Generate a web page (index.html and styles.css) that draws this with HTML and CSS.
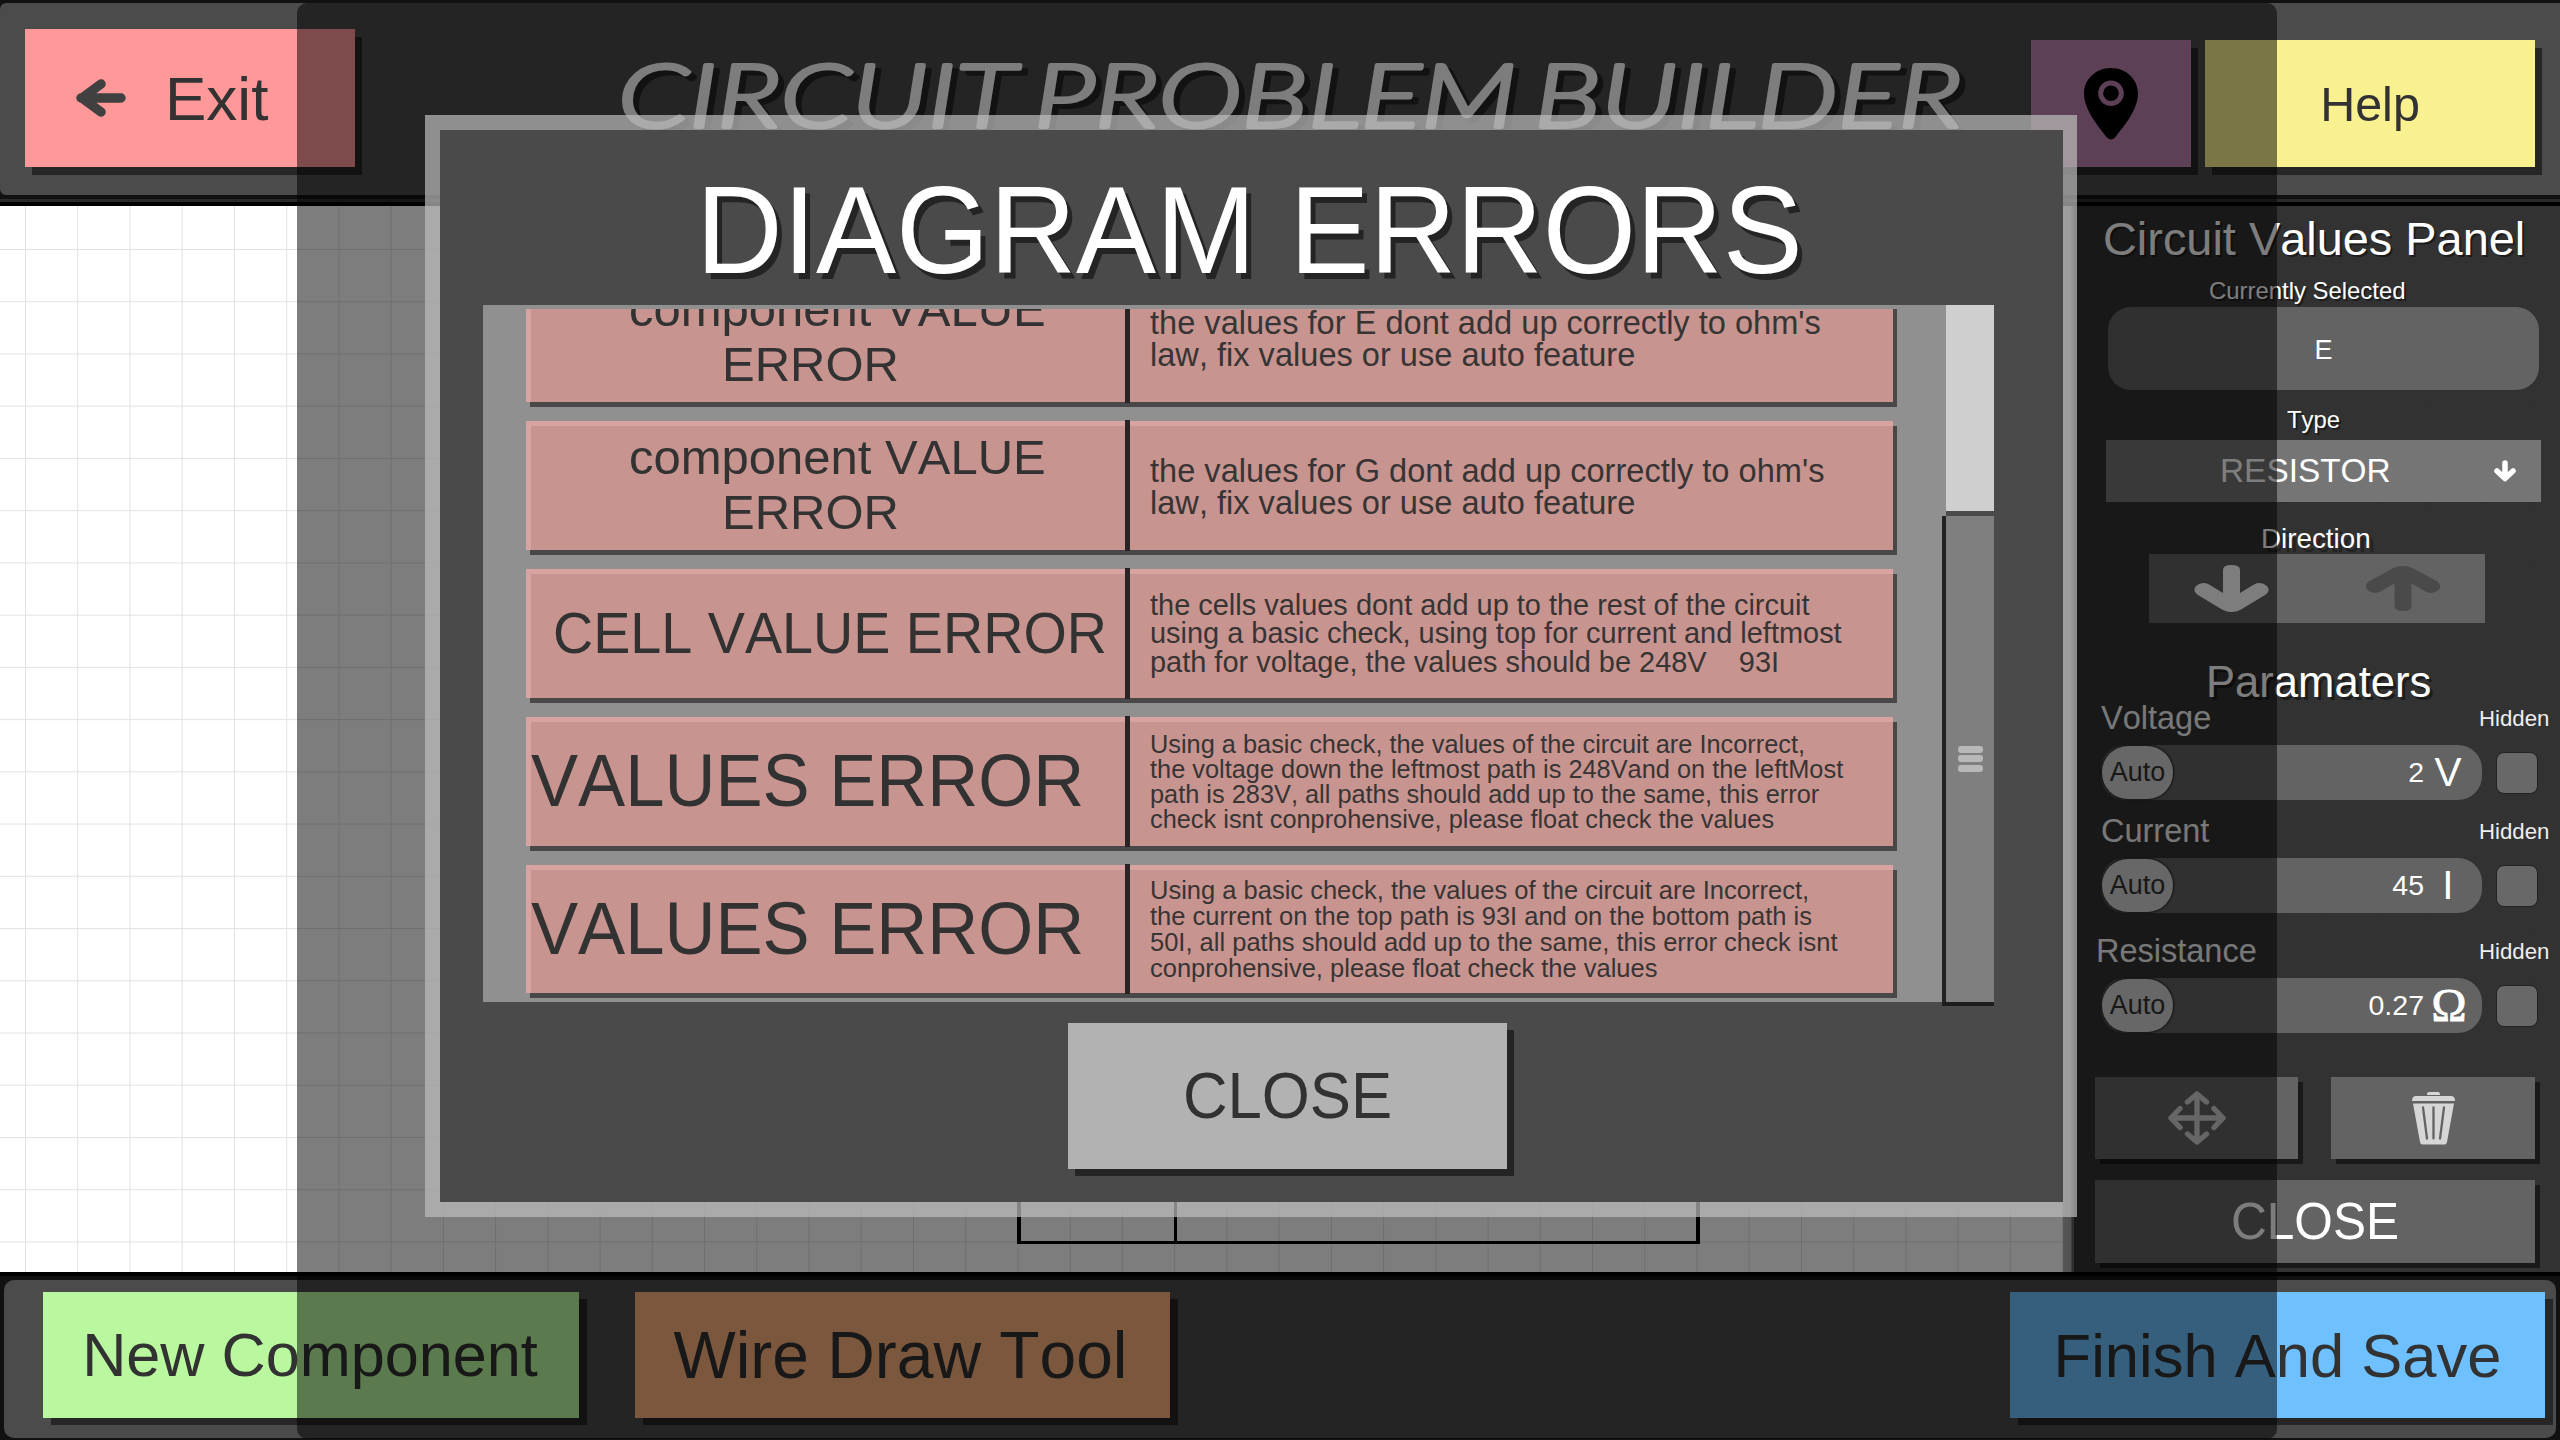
FILE: index.html
```html
<!DOCTYPE html>
<html lang="en">
<head>
<meta charset="utf-8">
<title>Circuit Problem Builder</title>
<link rel="stylesheet" href="styles.css">
</head>
<body>
<header class="topbar">
  <div class="topbar-inner">
    <button class="btn exit">
      <svg class="exit-icon" viewBox="0 0 50 38"><path d="M5 19H45M6 19L25 5M6 19L25 33" fill="none" stroke="currentColor" stroke-width="9.500" stroke-linecap="round" stroke-linejoin="round"/></svg>
      <span>Exit</span>
    </button>
    <svg class="app-title" viewBox="0 0 1400 192">
      <text class="app-title-shadow" x="24" y="129" textLength="1344" lengthAdjust="spacingAndGlyphs">CIRCUIT PROBLEM BUILDER</text>
      <text x="18" y="124" textLength="1344" lengthAdjust="spacingAndGlyphs">CIRCUIT PROBLEM BUILDER</text>
    </svg>
    <button class="btn map">
      <svg class="pin" viewBox="0 0 54 72"><path fill-rule="evenodd" d="M27 0C12 0 0 11 0 26C0 43 18 63 23 69.500Q27 73.500 31 69.500C36 63 54 43 54 26C54 11 42 0 27 0ZM27 12.500a12.800 12.800 0 1 1 0 25.600a12.800 12.800 0 1 1 0-25.600Z"/><circle cx="27" cy="25.300" r="7.800"/></svg>
    </button>
    <button class="btn help">Help</button>
  </div>
</header>

<main class="workspace">
  <svg class="wires" viewBox="0 0 2063 1066">
    <path d="M1019 900V1037.500" stroke-width="4"/><path d="M1175.500 900V1037.500" stroke-width="3"/>
    <path d="M1017 1036.500H1700" stroke-width="3"/><path d="M1698 900V1038" stroke-width="4"/>
  </svg>
  <aside class="panel">
    <h2 class="panel-title">Circuit Values Panel</h2>
    <div class="caption selected-caption">Currently Selected</div>
    <div class="selected">E</div>
    <div class="caption type-caption">Type</div>
    <div class="dropdown"><span>RESISTOR</span>
      <svg viewBox="0 0 22 22"><path d="M11 3V18M3 11L11 18.500L19 11" fill="none" stroke="#fff" stroke-width="5.500" stroke-linecap="round" stroke-linejoin="round"/></svg>
    </div>
    <div class="caption direction-caption">Direction</div>
    <div class="direction">
      <svg class="dir-down" viewBox="0 0 75 47"><path d="M29 5Q29 0 37.500 0T46 5V28L60 19.500Q67 16 73 21Q77 26 71 30L47 44.500Q37.500 49.500 28 44.500L4 30Q-2 26 2 21Q8 16 15 19.500L29 28Z"/></svg>
      <svg class="dir-up" viewBox="0 0 75 45"><path d="M29 40Q29 45 37.500 45T46 40V17.500L60 25.500Q67 29 73 24Q77 19 71 15L47 2Q37.500-2 28 2L4 15Q-2 19 2 24Q8 29 15 25.500L29 17.500Z"/></svg>
    </div>
    <h3 class="params-title">Paramaters</h3>

    <div class="labels"><span class="name">Voltage</span><span class="hidden-label">Hidden</span></div>
    <div class="param"><div class="slider"><button class="auto">Auto</button><span class="value">2</span><span class="unit">V</span></div><i class="check"></i></div>
    <div class="labels current"><span class="name">Current</span><span class="hidden-label">Hidden</span></div>
    <div class="param"><div class="slider"><button class="auto">Auto</button><span class="value">45</span><span class="unit">I</span></div><i class="check"></i></div>
    <div class="labels resistance"><span class="name">Resistance</span><span class="hidden-label">Hidden</span></div>
    <div class="param"><div class="slider"><button class="auto">Auto</button><span class="value">0.27</span><span class="unit ohm">Ω</span></div><i class="check"></i></div>

    <div class="actions">
      <button class="tool move"><svg viewBox="0 0 58 54"><path d="M29 3V51M3 27H55M19.500 11L29 3L38.500 11M19.500 43L29 51L38.500 43M12 17.500L3 27L12 36.500M46 17.500L55 27L46 36.500" fill="none" stroke="#d0d0d0" stroke-width="5.300" stroke-linecap="round" stroke-linejoin="round"/></svg></button>
      <button class="tool trash"><svg viewBox="0 0 43 53"><path fill="#d6d6d6" d="M17 0H26Q28 0 28 3H15Q15 0 17 0ZM4 4H39Q43 4 43 9H0Q0 4 4 4ZM1 11.500H42L35 50Q34.500 52.500 32.500 52.500H10.500Q8.500 52.500 8 50Z"/><path d="M11 15.500L15 46.500M21.500 15.500V46.500M32 15.500L28 46.500" stroke="#636363" stroke-width="2.300" stroke-linecap="round"/></svg></button>
    </div>
    <button class="tool panel-close"><span class="caps">CLOSE</span></button>
  </aside>
</main>

<footer class="bottombar">
  <div class="bottombar-inner">
    <button class="btn new">New Component</button>
    <button class="btn wire">Wire Draw Tool</button>
    <button class="btn finish">Finish And Save</button>
  </div>
</footer>

<div class="scrim"></div>
<section class="modal">
  <h1 class="modal-title"><span class="caps">DIAGRAM ERRORS</span></h1>
  <div class="list">
    <div class="rows">
      <article class="row">
        <div class="kind component"><span>component VALUE</span><span class="second">ERROR</span></div><i class="divider"></i>
        <p class="message two">the values for E dont add up correctly to ohm's<br>law, fix values or use auto feature</p>
      </article>
      <article class="row">
        <div class="kind component"><span>component VALUE</span><span class="second">ERROR</span></div><i class="divider"></i>
        <p class="message two">the values for G dont add up correctly to ohm's<br>law, fix values or use auto feature</p>
      </article>
      <article class="row">
        <div class="kind cell"><span class="caps">CELL VALUE ERROR</span></div><i class="divider"></i>
        <p class="message three">the cells values dont add up to the rest of the circuit<br>using a basic check, using top for current and leftmost<br>path for voltage, the values should be 248V &nbsp;&nbsp; 93I</p>
      </article>
      <article class="row">
        <div class="kind values"><span class="caps">VALUES ERROR</span></div><i class="divider"></i>
        <p class="message four">Using a basic check, the values of the circuit are Incorrect,<br>the voltage down the leftmost path is 248Vand on the leftMost<br>path is 283V, all paths should add up to the same, this error<br>check isnt conprohensive, please float check the values</p>
      </article>
      <article class="row">
        <div class="kind values"><span class="caps">VALUES ERROR</span></div><i class="divider"></i>
        <p class="message four loose">Using a basic check, the values of the circuit are Incorrect,<br>the current on the top path is 93I and on the bottom path is<br>50I, all paths should add up to the same, this error check isnt<br>conprohensive, please float check the values</p>
      </article>
    </div>
    <div class="scrollbar">
      <div class="thumb"></div>
      <div class="track"><i></i><i></i><i></i></div>
    </div>
  </div>
  <button class="modal-close"><span class="caps">CLOSE</span></button>
</section>
</body>
</html>
```
FILE: styles.css
```css
* { box-sizing: border-box; }
body {
  margin: 0;
  width: 2560px;
  height: 1440px;
  overflow: hidden;
  position: relative;
  display: flex;
  flex-direction: column;
  background: #000;
  font-family: "Liberation Sans", Arial, sans-serif;
  font-kerning: none;
  font-variant-ligatures: none;
  color: #323232;
}
h1, h2, h3, p { margin: 0; font-weight: 400; }
button {
  border: 0;
  padding: 0;
  margin: 0;
  font: inherit;
  font-kerning: none;
  color: #323232;
  white-space: nowrap;
}
svg { display: block; flex: none; }

/* all-capital labels are drawn slightly taller, growing from the baseline */
.caps { display: inline-block; transform: scaleY(1.040); transform-origin: 0 80%; }

/* top bar */
.topbar {
  flex: none;
  height: 206px;
  padding-top: 3px;
  background: linear-gradient(#111 0 199px, #2a2a2a 199px 202px, #000 202px);
}
.topbar-inner {
  height: 192px;
  display: flex;
  align-items: flex-start;
  background: #4b4b4b;
  border-radius: 6px 0 0 6px;
}
.btn { flex: none; box-shadow: 7px 8px 0 #262626; }
.exit {
  width: 330px;
  height: 138px;
  margin: 26px 0 0 25px;
  padding-left: 51px;
  display: flex;
  align-items: center;
  background: #ff9999;
  font-size: 62px;
}
.exit-icon { width: 50px; height: 38px; margin-right: 39px; color: #404040; }
.app-title { width: 1400px; height: 192px; margin-left: 245px; }
.app-title text {
  font-family: Lato, sans-serif;
  font-style: italic;
  font-weight: 300;
  font-size: 87px;
  word-spacing: -8px;
  fill: #fff;
  stroke: #fff;
  stroke-width: 4px;
  stroke-linejoin: round;
  stroke-linecap: round;
}
.app-title .app-title-shadow { fill: #262626; stroke: #262626; }
.map {
  width: 160px;
  height: 127px;
  margin: 37px 0 0 31px;
  display: flex;
  justify-content: center;
  align-items: center;
  background: #c083b0;
}
.pin { width: 54px; height: 72px; }
.help {
  width: 330px;
  height: 127px;
  margin: 37px 0 0 14px;
  background: #f9f18f;
  font-size: 48.500px;
}

/* workspace */
.workspace {
  flex: none;
  height: 1066px;
  display: flex;
  background-color: #fff;
  background-image:
    linear-gradient(90deg, #e2e2e2 1.200px, transparent 1.200px),
    linear-gradient(#e2e2e2 1.200px, transparent 1.200px);
  background-size: 52.240px 52.240px;
  background-position: 25px 43px;
}
.wires { width: 2063px; height: 1066px; stroke: #000; fill: none; }

.panel {
  width: 497px;
  height: 1066px;
  padding: 3px 0 0 11px;
  display: flex;
  flex-direction: column;
  background: linear-gradient(90deg, #b2b2b2 0, #a5a5a5 8px, #606060 9px, #606060 11px, rgba(46, 46, 46, 0.980) 11px);
  color: #fff;
}
.panel > * { flex: none; }
.panel-title { font-size: 46.900px; line-height: 60px; padding-left: 29px; text-shadow: 2px 2px 0 #1c1c1c; white-space: nowrap; }
.caption { font-size: 23.900px; text-shadow: 2px 2px 0 #1c1c1c; }
.selected-caption { padding: 5px 0 0 135px; line-height: 33px; }
.selected {
  width: 431px;
  height: 83px;
  margin-left: 34px;
  border-radius: 23px;
  background: #636363;
  font-size: 27px;
  line-height: 86px;
  text-align: center;
}
.type-caption { padding: 9px 0 0 213px; line-height: 41px; }
.dropdown {
  width: 435px;
  height: 62px;
  margin-left: 32px;
  display: flex;
  align-items: center;
  background: #757575;
  font-size: 33.400px;
}
.dropdown span { width: 388px; padding-left: 114px; }
.dropdown svg { width: 22px; height: 22px; }
.direction-caption { padding: 21px 0 0 187px; font-size: 27.800px; line-height: 31px; text-shadow: 4px 4px 0 #222; }
.direction {
  width: 336px;
  height: 69px;
  margin-left: 75px;
  display: flex;
  background: #636363;
}
.dir-down { width: 75px; height: 47px; margin: 11px 0 0 45px; fill: #fff; }
.dir-up { width: 76px; height: 45px; margin: 12px 0 0 96px; fill: #4a4a4a; }
.params-title { padding: 37px 0 0 132px; font-size: 43.600px; line-height: 45px; text-shadow: 3px 3px 0 #1c1c1c; }

.labels { height: 40px; display: flex; padding-left: 27px; line-height: 26px; }
.labels.current { margin-top: 18px; }
.labels.resistance { margin-top: 25px; padding-left: 22px; }
.name { flex: 1; font-size: 32.500px; color: #f4f4f4; }
.hidden-label { width: 81px; padding-top: 1px; font-size: 22.200px; color: #ededed; }
.param { height: 55px; display: flex; align-items: center; padding-left: 27px; }
.slider {
  width: 381px;
  height: 55px;
  display: flex;
  align-items: center;
  border-radius: 24px;
  background: #636363;
}
.auto {
  width: 71px;
  height: 53px;
  margin-left: 1px;
  border-radius: 26px;
  background: #d2d2d2;
  box-shadow: 0 0 2px 1px #222;
  font-size: 27px;
}
.value { flex: 1; padding-right: 2px; text-align: right; font-size: 28.500px; }
.unit { width: 44px; margin-right: 12px; text-align: center; font-size: 40.500px; line-height: 55px; }
.ohm { padding-left: 2px; font-family: "Liberation Serif", serif; font-size: 47px; -webkit-text-stroke: 1px #fff; }
.check { width: 42px; height: 42px; margin-left: 14px; border: 1px solid #222; border-radius: 8px; background: #686868; }

.tool { background: #636363; box-shadow: 5px 5px 0 #191919; color: #fff; display: flex; justify-content: center; align-items: center; }
.actions { display: flex; gap: 33px; margin: 44px 0 0 21px; }
.move { width: 203px; height: 82px; }
.move svg { width: 58px; height: 54px; }
.trash { width: 204px; height: 82px; }
.trash svg { width: 43px; height: 53px; }
.panel-close { width: 440px; height: 83px; margin: 21px 0 0 21px; font-size: 49.600px; }

/* bottom bar */
.bottombar {
  flex: none;
  height: 168px;
  padding: 8px 4px 0;
  background: linear-gradient(#000 4px, #111 4px);
}
.bottombar-inner {
  height: 158px;
  padding: 12px 11px 0 39px;
  display: flex;
  align-items: flex-start;
  background: #4b4b4b;
  border-radius: 10px;
}
.bottombar .btn { height: 126px; box-shadow: 8px 7px 0 #262626; }
.new { width: 536px; padding-right: 2px; background: #b9f89e; font-size: 61.200px; }
.wire { width: 535px; margin-left: 56px; padding-right: 4px; background: #f9b17c; font-size: 65.900px; }
.finish { width: 535px; margin-left: auto; background: #6ec0ff; font-size: 61.500px; }

/* dimmed area behind the dialog */
.scrim {
  position: absolute;
  left: 297px;
  top: 3px;
  width: 1980px;
  height: 1436px;
  border-radius: 10px;
  background: rgba(0, 0, 0, 0.510);
}

/* error dialog */
.modal {
  position: absolute;
  left: 425px;
  top: 115px;
  width: 1652px;
  height: 1102px;
  border: solid rgba(190, 190, 190, 0.700);
  border-width: 15px 14px 15px 15px;
  background: #4a4a4a;
  background-clip: padding-box;
}
.modal-title {
  height: 175px;
  padding: 28px 0 0 256px;
  font-size: 120px;
  line-height: 147px;
  color: #fff;
  text-shadow: 5px 6px 0 #242424;
  white-space: nowrap;
}
.list {
  width: 1511px;
  height: 697px;
  margin-left: 43px;
  display: flex;
  background: #909090;
}
.rows {
  width: 1459px;
  height: 693px;
  margin-top: 4px;
  padding-left: 43px;
  overflow: hidden;
}
.row {
  width: 1367px;
  height: 129px;
  margin-bottom: 19px;
  display: flex;
  background: #c79490;
  box-shadow: inset 5px 5px 0 #d8a3a1, 4px 5px 0 #484848;
}
.row:first-child { margin-top: -36px; }
.row:last-child { height: 128px; }
.kind {
  width: 599px;
  display: flex;
  flex-direction: column;
  justify-content: center;
  align-items: flex-start;
  white-space: nowrap;
}
.component { padding: 0 0 1px 103px; font-size: 49px; line-height: 55.500px; }
.second { padding-left: 93px; }
.cell { padding-left: 27px; font-size: 55.700px; }
.values { padding-left: 5px; font-size: 70.600px; }
.divider { width: 5px; margin: -1px 0; background: #2b2323; }
.message { padding-left: 20px; align-self: center; color: #383434; white-space: nowrap; }
.two { padding-top: 2px; font-size: 32.600px; line-height: 32px; }
.three { font-size: 28.950px; line-height: 28.200px; }
.four { font-size: 25.350px; line-height: 25px; }
.four.loose { font-size: 25.500px; line-height: 26px; }

.scrollbar { width: 52px; height: 697px; }
.thumb { height: 211px; margin-left: 4px; background: #cfcfcf; border-bottom: 5px solid #4a4a4a; }
.track {
  height: 486px;
  padding-top: 230px;
  border-left: 4px solid #222;
  background: #7f7f7f;
  box-shadow: 0 4px 0 #1d1d1d;
}
.track i { display: block; width: 25px; height: 7px; margin: 0 0 2.300px 12px; border-radius: 3px; background: #b8b8b8; }

.modal-close {
  display: block;
  width: 439px;
  height: 146px;
  margin: 21px 0 0 628px;
  background: #b2b2b2;
  box-shadow: 7px 7px 0 #242424;
  font-size: 61.700px;
}
```
